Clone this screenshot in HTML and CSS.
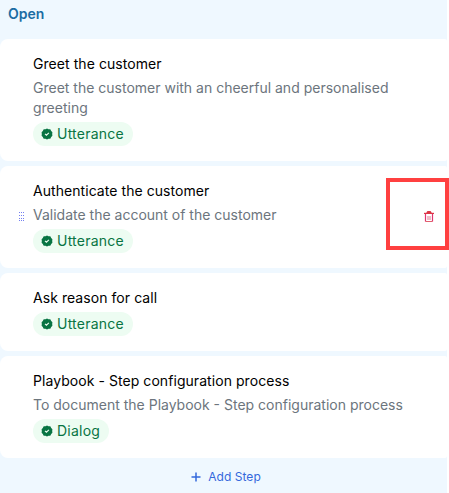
FILE: index.html
```html
<!DOCTYPE html>
<html lang="en">
<head>
<meta charset="utf-8">
<title>Playbook steps</title>
<link rel="stylesheet" href="styles.css">
</head>
<body>
<svg class="defs" width="0" height="0">
  <symbol id="check" viewBox="0 0 12 12">
    <path fill="#087443" d="M6 .5 7.5 1.2 9.3 1.3 10.2 2.9 11.4 4.3 11.2 6 11.4 7.7 10.2 9.1 9.3 10.7 7.5 10.8 6 11.5 4.5 10.8 2.7 10.7 1.8 9.1.6 7.7.8 6 .6 4.3 1.8 2.9 2.7 1.3 4.5 1.2Z"/>
    <path fill="none" stroke="#edfcf2" stroke-width="1.1" d="m4 5.9 1.4 1.3 2.5-2.4"/>
  </symbol>
</svg>
<main class="stage">
  <h1 class="stage-title">Open</h1>
  <div class="steps">
    <section class="step">
      <h2 class="name">Greet the customer</h2>
      <p class="description">Greet the customer with an cheerful and personalised greeting</p>
      <span class="tag"><svg class="check"><use href="#check"/></svg>Utterance</span>
    </section>
    <section class="step">
      <h2 class="name">Authenticate the customer</h2>
      <p class="description">Validate the account of the customer</p>
      <span class="tag"><svg class="check"><use href="#check"/></svg>Utterance</span>
      <svg class="drag" viewBox="0 0 6 10" fill="#7480f0" shape-rendering="crispEdges">
        <path d="M0 0h1v1H0zM2 0h1v1H2zM4 0h1v1H4zM0 3h1v1H0zM2 3h1v1H2zM4 3h1v1H4zM0 6h1v1H0zM2 6h1v1H2zM4 6h1v1H4zM0 8h1v1H0zM2 8h1v1H2zM4 8h1v1H4z"/>
      </svg>
      <div class="highlight">
        <svg class="trash" viewBox="0 0 12 12" fill="none">
          <path stroke="#dc3545" stroke-width="1.2" d="M1 2.4h10"/>
          <path fill="#dc3545" d="M3.5 2V1.2L4.5 0h3l1 1.2V2z"/>
          <path stroke="#e03570" stroke-width="1.2" d="M2.5 3v7.5M9.5 3v7.5"/>
          <path stroke="#e0606c" d="M2.5 10.5h7"/>
          <path stroke="#e07a90" d="M5 5v4M7 5v4"/>
        </svg>
      </div>
    </section>
    <section class="step">
      <h2 class="name">Ask reason for call</h2>
      <span class="tag"><svg class="check"><use href="#check"/></svg>Utterance</span>
    </section>
    <section class="step">
      <h2 class="name">Playbook - Step configuration process</h2>
      <p class="description">To document the Playbook - Step configuration process</p>
      <span class="tag"><svg class="check"><use href="#check"/></svg>Dialog</span>
    </section>
  </div>
  <button class="add"><svg class="plus" viewBox="0 0 10 10"><path stroke="#3468dc" stroke-width="1.5" d="M5 .5v9M.5 5h9"/></svg>Add Step</button>
</main>
</body>
</html>
```

FILE: styles.css
```css
* { box-sizing: border-box; }
body { margin: 0; background: #fff; font-family: Inter, sans-serif; font-size: 14px; line-height: 20px; }
.defs { position: absolute; }
.stage { width: 447px; height: 493px; background: #eff8ff; display: flex; flex-direction: column; }
.stage-title { margin: 0; height: 39px; padding: 4px 8px; font-size: 14px; font-weight: 600; color: #1b6ca3; }
.steps { display: flex; flex-direction: column; gap: 5px; }
.step { position: relative; display: flex; flex-direction: column; align-items: flex-start; gap: 4px; padding: 15px 33px; background: #fff; border-radius: 8px 2px 2px 8px; }
.name { margin: 0; font-size: 14px; font-weight: 400; letter-spacing: .06px; color: #000; }
.description { margin: 0; color: #6c757d; }
.tag { display: flex; align-items: center; gap: 4px; height: 24px; padding: 0 9px 0 8px; border-radius: 12px; background: #edfcf2; color: #087443; letter-spacing: .22px; }
.check { width: 12px; height: 12px; }
.drag { position: absolute; left: 19px; top: 46px; width: 6px; height: 10px; }
.highlight { position: absolute; left: 386px; top: 12px; width: 63px; height: 72px; border: 4px solid #ff4040; padding: 29px 0 0 33px; }
.trash { display: block; width: 12px; height: 12px; }
.add { flex: 1; display: flex; align-items: center; justify-content: center; gap: 7px; border: 0; padding: 3px 0 0 5px; background: none; font: 400 12px/20px Inter, sans-serif; letter-spacing: .05px; color: #3468dc; }
.plus { width: 10px; height: 10px; }
```
